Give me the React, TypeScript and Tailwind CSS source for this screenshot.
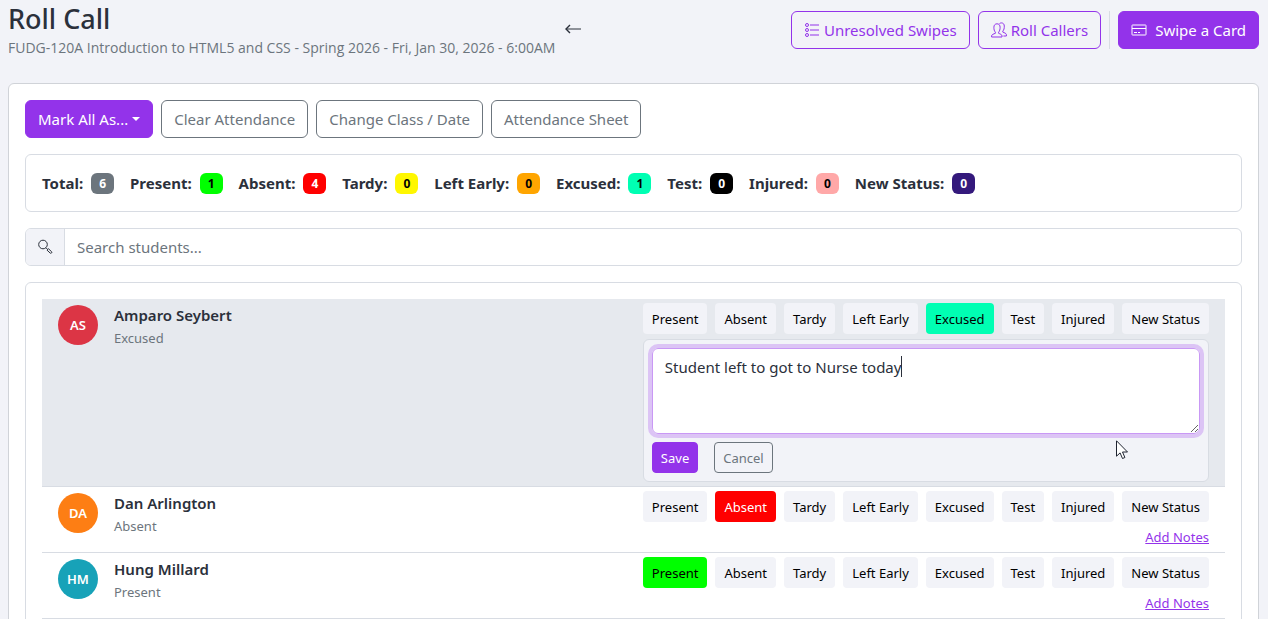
import { useState } from 'react';

interface Status {
  label: string;
  count: number;
  color: string;
}

interface Student {
  name:     string;
  initials: string;
  avatar:   string;
  status:   string;
  editing?: boolean;
}

const STATUSES: Status[] = [
  { label: 'Present',    count: 1, color: 'bg-[#00ff00] text-black' },
  { label: 'Absent',     count: 4, color: 'bg-[#ff0000] text-white' },
  { label: 'Tardy',      count: 0, color: 'bg-[#fff700] text-black' },
  { label: 'Left Early', count: 0, color: 'bg-[#ffa500] text-black' },
  { label: 'Excused',    count: 1, color: 'bg-[#00ffb3] text-black' },
  { label: 'Test',       count: 0, color: 'bg-black text-white'     },
  { label: 'Injured',    count: 0, color: 'bg-[#ffa8a8] text-black' },
  { label: 'New Status', count: 0, color: 'bg-[#34197c] text-white' },
];

const COUNTERS: Status[] = [
  { label: 'Total', count: 6, color: 'bg-[#6c757d] text-white' },
  ...STATUSES,
];

const STUDENTS: Student[] = [
  { name: 'Amparo Seybert', initials: 'AS', avatar: 'bg-[#dc3545]', status: 'Excused', editing: true },
  { name: 'Dan Arlington',  initials: 'DA', avatar: 'bg-[#fd7e14]', status: 'Absent'  },
  { name: 'Hung Millard',   initials: 'HM', avatar: 'bg-[#17a2b8]', status: 'Present' },
];

const BTN            = 'flex items-center h-[38px] px-3 rounded-md border whitespace-nowrap';
const BTN_PRIMARY    = `${BTN} border-[#9333ea] bg-[#9333ea] text-white`;
const BTN_OUTLINE    = `${BTN} border-[#9333ea] text-[#9333ea]`;
const BTN_SECONDARY  = `${BTN} border-[#6c757d] text-[#6c757d]`;
const BTN_SM         = 'h-[31px] px-2 rounded border text-[13px] whitespace-nowrap';

function ListIcon() {
  return (
    <svg width="16" height="16" viewBox="0 0 16 16" fill="none" stroke="currentColor" aria-hidden="true">
      <circle cx="3" cy="3" r="1.5" />
      <circle cx="3" cy="8" r="1.5" />
      <circle cx="3" cy="13" r="1.5" />
      <path d="M6 3h9M6 8h9M6 13h9" />
    </svg>
  );
}

function PeopleIcon() {
  return (
    <svg width="16" height="16" viewBox="0 0 16 16" fill="none" stroke="currentColor" aria-hidden="true">
      <path d="M4.4 10.2C3.2 9 2.9 7.4 2.9 5.2c0-2 1.2-3.4 3.1-3.4s3.1 1.4 3.1 3.4c0 2.2-.4 3.8-1.5 5v1.1c1.6.7 3.4 1.3 3.4 2.5V15H.6v-1.2c0-1.2 1.9-1.8 3.8-2.5z" />
      <path d="M8.4 1.8c.5-.6 1.2-.9 2-.9 1.8 0 2.9 1.3 2.9 3.2 0 2.1-.3 3.9-1.5 5v1c1.6.7 3.6 1.3 3.6 2.6V14h-3" />
    </svg>
  );
}

function CardIcon() {
  return (
    <svg width="16" height="16" viewBox="0 0 16 16" fill="none" stroke="currentColor" aria-hidden="true">
      <rect x="1" y="3" width="14" height="10" rx=".5" />
      <path d="M1 6.5h14M3 10.5h3M7 10.5h2" />
    </svg>
  );
}

function SearchIcon() {
  return (
    <svg width="16" height="16" viewBox="0 0 16 16" fill="none" stroke="currentColor" aria-hidden="true">
      <circle cx="6" cy="5.5" r="4.3" />
      <path d="M9 8.8l1.4 1.4M10 11.1l1.4-1.4 3.2 3c.8.8-.6 2.2-1.4 1.4z" />
    </svg>
  );
}

function ArrowLeftIcon() {
  return (
    <svg width="16" height="16" viewBox="0 0 16 16" fill="none" stroke="currentColor" aria-hidden="true">
      <path d="M1 8h15" />
      <path d="M5 4L1 8l4 4" strokeWidth="1.4" />
    </svg>
  );
}

function Pointer() {
  return (
    <svg className="absolute right-[79px] bottom-[21px]" width="13" height="20" viewBox="0 0 13 20" aria-hidden="true">
      <path d="M.5.8v15.4l3.6-3.3 2.4 5.6 2.4-1-2.4-5.5h5z" fill="#fff" stroke="#1f2330" />
    </svg>
  );
}

function NoteEditor({ name }: { name: string }) {
  const [note, setNote] = useState('Student left to got to Nurse today');

  return (
    <div className="relative mt-[5px] p-2 rounded-md border border-[#d8dce3] bg-[#f2f3f8]">
      <div className="relative">
        <textarea
          aria-label={`Notes for ${name}`}
          value={note}
          onChange={e => setNote(e.target.value)}
          className="block w-full h-[86px] px-3 py-1.5 rounded-md border border-[#c998f5] bg-white outline-4 outline-[#dcc4f5]"
        />
        {/* text caret */}
        <div className="absolute top-2 left-[13px] h-[21px] border-r border-[#2b303b] pointer-events-none" aria-hidden="true">
          <span className="invisible">{note}</span>
        </div>
      </div>
      <div className="flex gap-4 mt-2">
        <button className={`${BTN_SM} border-[#9333ea] bg-[#9333ea] text-white`}>Save</button>
        <button className={`${BTN_SM} border-[#6c757d] text-[#6c757d]`}>Cancel</button>
      </div>
      <Pointer />
    </div>
  );
}

function StudentRow({ student }: { student: Student }) {
  const [status, setStatus] = useState(student.status);

  return (
    <li className={`flex justify-between items-start px-4 py-1 border-b border-[#d8dce3] ${student.editing ? 'bg-[#e6e9ee]' : ''}`}>
      <div className="flex gap-4 pt-0.5">
        <div className={`flex items-center justify-center size-10 rounded-full text-[13px] font-semibold text-white ${student.avatar}`}>
          {student.initials}
        </div>
        <div>
          <div className="font-semibold leading-5">{student.name}</div>
          <div className="mt-1 text-[13px] leading-[18px] text-[#6c757d]">{status}</div>
        </div>
      </div>

      <div className="flex flex-col">
        <div className="flex gap-2">
          {STATUSES.map(s => (
            <button
              key={s.label}
              onClick={() => setStatus(s.label)}
              className={`${BTN_SM} border-transparent ${s.label === status ? s.color : 'bg-[#f2f3f8] text-black'}`}
            >
              {s.label}
            </button>
          ))}
        </div>
        {student.editing
          ? <NoteEditor name={student.name} />
          : <a href="#notes" className="self-end mt-1 text-[13px] leading-[22px] text-[#9333ea] underline">Add Notes</a>}
      </div>
    </li>
  );
}

export default function App() {
  return (
    <div className="min-h-screen bg-[#f2f3f8] pl-2 pr-[9px] pt-[3px] text-[15px] leading-6 text-[#2b303b] font-['Noto_Sans','Open_Sans',sans-serif]">
      <header className="flex justify-between items-start h-20">
        <div className="flex gap-2.5">
          <div>
            <h1 className="text-[27px] leading-8 font-medium">Roll Call</h1>
            <p className="text-sm leading-[26px] text-[#6c757d] font-['Open_Sans',sans-serif]">
              FUDG-120A Introduction to HTML5 and CSS - Spring 2026 - Fri, Jan 30, 2026 - 6:00AM
            </p>
          </div>
          <button aria-label="Back" className="self-start pt-[18px]"><ArrowLeftIcon /></button>
        </div>
        <div className="flex gap-2 pt-2">
          <button className={`${BTN_OUTLINE} gap-1`}><ListIcon />Unresolved Swipes</button>
          <button className={`${BTN_OUTLINE} gap-1`}><PeopleIcon />Roll Callers</button>
          <div className="w-px bg-[#d8dce3]" />
          <button className={`${BTN_PRIMARY} gap-2`}><CardIcon />Swipe a Card</button>
        </div>
      </header>

      <main className="rounded-t-md border border-[#d0d3d8] bg-white p-4">
        <div className="flex gap-2">
          <button className={`${BTN_PRIMARY} gap-1`}>
            Mark All As...
            <svg width="8" height="4" viewBox="0 0 8 4" fill="currentColor" aria-hidden="true"><path d="M0 0h8L4 4z" /></svg>
          </button>
          <button className={BTN_SECONDARY}>Clear Attendance</button>
          <button className={BTN_SECONDARY}>Change Class / Date</button>
          <button className={BTN_SECONDARY}>Attendance Sheet</button>
        </div>

        <div className="flex gap-4 mt-4 p-4 rounded-md border border-[#d8dce3] font-bold">
          {COUNTERS.map(c => (
            <div key={c.label} className="flex items-center gap-2 whitespace-nowrap">
              {c.label}:
              <span className={`px-2 rounded-md text-xs leading-[21px] ${c.color}`}>{c.count}</span>
            </div>
          ))}
        </div>

        <div className="flex mt-4 h-[38px] rounded-md border border-[#d8dce3] overflow-hidden">
          <label htmlFor="search" className="flex items-center px-[11px] border-r border-[#d8dce3] bg-[#f2f3f8]">
            <SearchIcon />
          </label>
          <input id="search" aria-label="Search students" placeholder="Search students..." className="flex-1 px-3 placeholder:text-[#6c757d]" />
        </div>

        <ul className="mt-4 p-4 rounded-md border border-[#d8dce3]">
          {STUDENTS.map(s => <StudentRow key={s.name} student={s} />)}
        </ul>
      </main>
    </div>
  );
}
